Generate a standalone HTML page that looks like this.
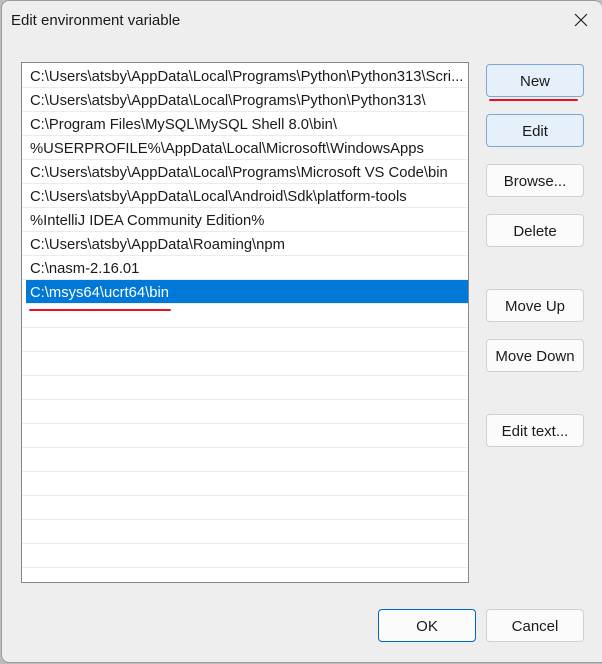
<!DOCTYPE html>
<html><head><meta charset="utf-8"><style>
*{box-sizing:border-box;margin:0;padding:0}
html,body{width:602px;height:664px;overflow:hidden;background:#bdbdbd}
body{font-family:"Liberation Sans",sans-serif;position:relative}
.win{position:absolute;left:1px;top:0;width:601px;height:663px;background:#eeeeee;border:1px solid #9a9a9a;border-right:none;border-radius:8px 8px 0 8px}
.title{position:absolute;left:9px;top:11px;font-size:15px;color:#1a1a1a}
.close{position:absolute;left:571px;top:11px}
.list{position:absolute;left:21px;top:62px;width:448px;height:521px;background:#fff;border:1px solid #828790;overflow:hidden}
.row{position:absolute;left:0;width:446px;height:24px;border-bottom:1px solid #ebebeb;font-size:14.8px;line-height:26px;padding-left:8px;color:#1a1a1a;white-space:nowrap;overflow:hidden}
.sel{background:#0078d7;color:#fff;left:4px;width:442px;padding-left:4px}
.btn{position:absolute;width:98px;height:33px;background:#fbfbfb;border:1px solid #d0d0d0;border-radius:4px;font-size:15px;text-align:center;line-height:34px;color:#1a1a1a}
.pri{background:#e5f0fb;border-color:#7aa7d4}
.ok{border-color:#0067c0}
.red{position:absolute;height:2px;background:#e81123;border-radius:1px}
</style></head><body>
<div class="win">
<div class="title">Edit environment variable</div>
<svg class="close" width="16" height="16" viewBox="0 0 16 16"><path d="M2 2L14 14M14 2L2 14" stroke="#222" stroke-width="1.2"/></svg>
</div>
<div class="list">
<div class="row" style="top:1px">C:\Users\atsby\AppData\Local\Programs\Python\Python313\Scri...</div>
<div class="row" style="top:25px">C:\Users\atsby\AppData\Local\Programs\Python\Python313\</div>
<div class="row" style="top:49px">C:\Program Files\MySQL\MySQL Shell 8.0\bin\</div>
<div class="row" style="top:73px">%USERPROFILE%\AppData\Local\Microsoft\WindowsApps</div>
<div class="row" style="top:97px">C:\Users\atsby\AppData\Local\Programs\Microsoft VS Code\bin</div>
<div class="row" style="top:121px">C:\Users\atsby\AppData\Local\Android\Sdk\platform-tools</div>
<div class="row" style="top:145px">%IntelliJ IDEA Community Edition%</div>
<div class="row" style="top:169px">C:\Users\atsby\AppData\Roaming\npm</div>
<div class="row" style="top:193px">C:\nasm-2.16.01</div>
<div class="row sel" style="top:217px">C:\msys64\ucrt64\bin</div>
<div class="row" style="top:241px"></div>
<div class="row" style="top:265px"></div>
<div class="row" style="top:289px"></div>
<div class="row" style="top:313px"></div>
<div class="row" style="top:337px"></div>
<div class="row" style="top:361px"></div>
<div class="row" style="top:385px"></div>
<div class="row" style="top:409px"></div>
<div class="row" style="top:433px"></div>
<div class="row" style="top:457px"></div>
<div class="row" style="top:481px"></div>
<div class="row" style="top:505px"></div>
</div>
<div class="red" style="left:29px;top:309px;width:142px"></div>
<div class="red" style="left:489px;top:99px;width:89px"></div>
<div class="btn pri" style="left:486px;top:64px">New</div>
<div class="btn pri" style="left:486px;top:114px">Edit</div>
<div class="btn" style="left:486px;top:164px">Browse...</div>
<div class="btn" style="left:486px;top:214px">Delete</div>
<div class="btn" style="left:486px;top:289px">Move Up</div>
<div class="btn" style="left:486px;top:339px">Move Down</div>
<div class="btn" style="left:486px;top:414px">Edit text...</div>
<div class="btn ok" style="left:378px;top:609px">OK</div>
<div class="btn" style="left:486px;top:609px">Cancel</div>
</body></html>
